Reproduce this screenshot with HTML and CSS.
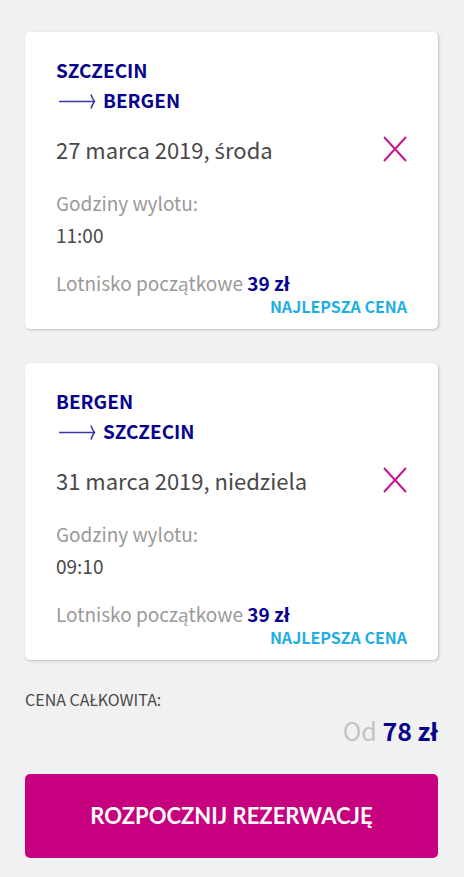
FILE: index.html
```html
<!DOCTYPE html>
<html lang="pl">
<head>
<meta charset="utf-8">
<meta name="viewport" content="width=device-width, initial-scale=1">
<title>Rezerwacja</title>
<link rel="stylesheet" href="styles.css">
</head>
<body>
<main class="summary">
  <section class="card">
    <h2 class="route">
      <span class="city">SZCZECIN</span>
      <span class="city"><svg class="arrow" viewBox="0 0 40 16" aria-hidden="true"><path d="M0 8.500H35"/><path d="M32 1.500Q33 5 35.500 8.500Q33 12 32 15.500"/></svg>BERGEN</span>
    </h2>
    <div class="date-row">
      <p class="date">27 marca 2019, <span class="accented">ś</span>roda</p>
      <button class="remove" type="button" aria-label="Usuń lot"><svg class="cross" viewBox="0 0 24 26" aria-hidden="true"><path d="M1 1L23 25M23 1L1 25"/></svg></button>
    </div>
    <dl class="times">
      <dt class="muted">Godziny wylotu:</dt>
      <dd class="time">11:00</dd>
    </dl>
    <p class="fare"><span class="muted">Lotnisko początkowe</span> <strong class="price">39 zł</strong></p>
    <p class="best">NAJLEPSZA CENA</p>
  </section>
  <section class="card">
    <h2 class="route">
      <span class="city">BERGEN</span>
      <span class="city"><svg class="arrow" viewBox="0 0 40 16" aria-hidden="true"><path d="M0 8.500H35"/><path d="M32 1.500Q33 5 35.500 8.500Q33 12 32 15.500"/></svg>SZCZECIN</span>
    </h2>
    <div class="date-row">
      <p class="date">31 marca 2019, niedziela</p>
      <button class="remove" type="button" aria-label="Usuń lot"><svg class="cross" viewBox="0 0 24 26" aria-hidden="true"><path d="M1 1L23 25M23 1L1 25"/></svg></button>
    </div>
    <dl class="times">
      <dt class="muted">Godziny wylotu:</dt>
      <dd class="time">09:10</dd>
    </dl>
    <p class="fare"><span class="muted">Lotnisko początkowe</span> <strong class="price">39 zł</strong></p>
    <p class="best">NAJLEPSZA CENA</p>
  </section>
  <section class="total">
    <p class="total-label">CENA CAŁKOWITA:</p>
    <p class="total-value"><span class="from">Od</span> <strong class="price">78 zł</strong></p>
  </section>
  <button class="book" type="button">ROZPOCZNIJ REZERWACJĘ</button>
</main>
</body>
</html>
```
FILE: styles.css
```css
* {
  box-sizing: border-box;
}

body {
  margin: 0;
  background: #f1f1f1;
  color: #484848;
  font-family: "Noto Sans CJK SC", "Open Sans", sans-serif;
}

p, h2, dl, dd {
  margin: 0;
}

.summary {
  padding: 32px 26px 20px 25px;
}

.card {
  padding: 23px 31px 12px;
  border-radius: 5px;
  background: #fff;
  box-shadow: 1px 1px 3px rgba(0, 0, 0, 0.22);
}

.card + .card {
  margin-top: 34px;
}

.route {
  margin-bottom: 18px;
  color: #06038d;
  font-size: 19px;
  font-weight: 700;
  line-height: 30px;
}

.city {
  display: flex;
  align-items: center;
}

.arrow {
  width: 40px;
  height: 16px;
  margin: 2px 4px 0 3px;
  fill: none;
  stroke: #3a35a8;
  stroke-width: 1.5;
}

.date-row {
  display: flex;
  align-items: center;
  justify-content: space-between;
  margin-bottom: 22px;
}

.date {
  font-size: 22px;
  line-height: 32px;
}

.accented {
  font-family: "Open Sans", sans-serif;
  line-height: 1;
}

.remove {
  display: flex;
  padding: 0;
  border: 0;
  background: none;
}

.cross {
  width: 24px;
  height: 26px;
  fill: none;
  stroke: #c6168d;
  stroke-width: 2;
}

.times {
  margin-bottom: 20px;
  font-size: 19px;
  line-height: 32px;
}

.muted {
  color: #999;
}

.price {
  color: #06038d;
  font-weight: 700;
}

.fare {
  font-size: 19px;
  line-height: 24px;
}

.best {
  color: #1daee3;
  font-size: 16px;
  font-weight: 700;
  line-height: 22px;
  text-align: right;
}

.total {
  margin: 27px 0 28px;
}

.total-label {
  margin-bottom: 3px;
  font-size: 16px;
  line-height: 24px;
}

.total-value {
  font-size: 25px;
  line-height: 32px;
  text-align: right;
}

.from {
  color: #c3c3c3;
}

.book {
  width: 100%;
  padding: 26px 16px;
  border: 0;
  border-radius: 5px;
  background: #c6007e;
  color: #fff;
  font-family: Lato, sans-serif;
  font-size: 22px;
  font-weight: 700;
  line-height: 32px;
}
```
